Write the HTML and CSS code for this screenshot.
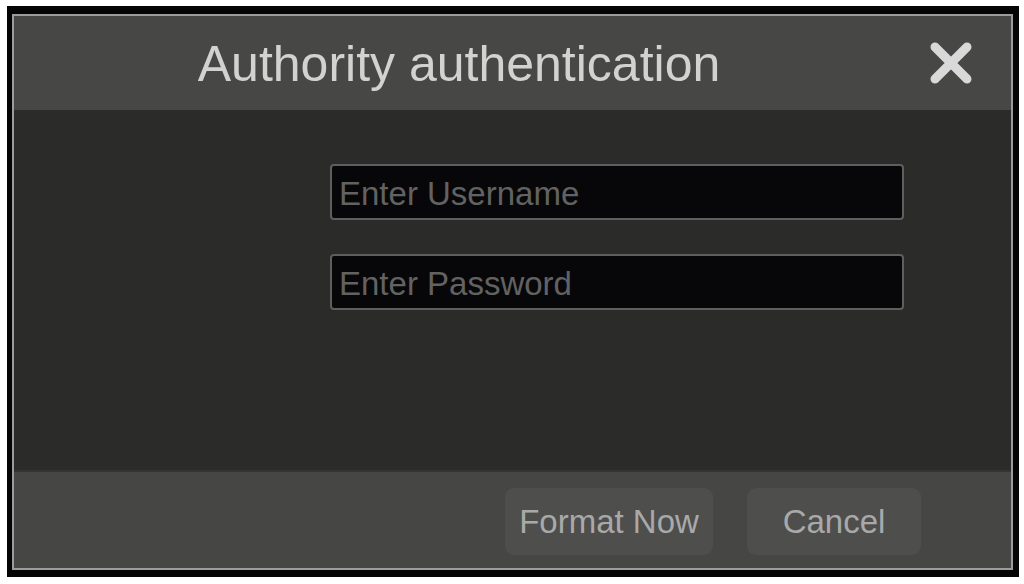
FILE: index.html
```html
<!DOCTYPE html>
<html>
<head>
<meta charset="utf-8">
<link rel="stylesheet" href="styles.css">
</head>
<body>
<div class="frame">
  <div class="dialog">
    <div class="header">
      <div class="title">Authority authentication</div>
      <svg class="close" width="44" height="42" viewBox="0 0 44 42">
        <path d="M6 5 L38 37 M38 5 L6 37" stroke="#d9d9d9" stroke-width="9" stroke-linecap="round" fill="none"/>
      </svg>
    </div>
    <div class="content">
      <input class="field" type="text" placeholder="Enter Username">
      <input class="field" type="password" placeholder="Enter Password">
    </div>
    <div class="footer">
      <div class="btn btn-format">Format Now</div>
      <div class="btn btn-cancel">Cancel</div>
    </div>
  </div>
</div>
</body>
</html>
```

FILE: styles.css
```css
html, body {
  margin: 0;
  padding: 0;
  background: #ffffff;
}
body {
  padding: 6px 0 0 7px;
  font-family: "Liberation Sans", Arial, sans-serif;
}
.frame {
  width: 1001px;
  height: 556px;
  background: #050505;
  padding: 8px 6px 7px 5px;
}
.dialog {
  box-sizing: border-box;
  width: 1001px;
  height: 556px;
  border: 2px solid #9c9c9c;
  display: flex;
  flex-direction: column;
}
.header {
  height: 94px;
  background: #474746;
  display: flex;
  align-items: center;
}
.title {
  flex: 1;
  text-align: center;
  color: #d2d2d2;
  font-size: 50px;
  line-height: 1;
  padding-top: 2px;
}
.close {
  margin-left: 25px;
  margin-right: 38px;
  flex: none;
}
.content {
  height: 360px;
  background: #2b2b2a;
  padding: 54px 0 0 316px;
  box-sizing: border-box;
  display: flex;
  flex-direction: column;
  gap: 34px;
}
.field {
  box-sizing: border-box;
  width: 574px;
  height: 56px;
  margin: 0;
  background: #070709;
  border: 2px solid #5e5e5e;
  border-radius: 4px;
  padding: 3px 0 0 7px;
  font-family: "Liberation Sans", Arial, sans-serif;
  font-size: 33px;
  color: #666666;
  outline: none;
}
.field::placeholder {
  color: #626262;
  opacity: 1;
}
.footer {
  flex: 1;
  background: #464645;
  border-top: 2px solid #343433;
  display: flex;
  justify-content: flex-end;
  align-items: flex-start;
  padding: 16px 90px 0 0;
  gap: 34px;
}
.btn {
  height: 67px;
  border-radius: 9px;
  background: #4e4e4d;
  color: #a9a9a9;
  font-size: 33px;
  display: flex;
  align-items: center;
  justify-content: center;
  box-sizing: border-box;
}
.btn-format {
  width: 208px;
}
.btn-cancel {
  width: 174px;
}
```
